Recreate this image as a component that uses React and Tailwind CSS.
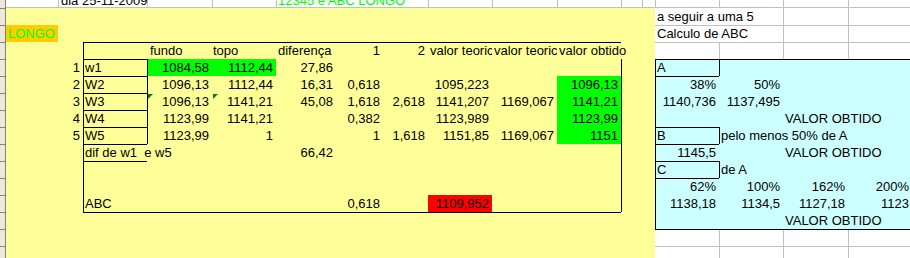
import React from 'react';
import clsx from 'clsx';

// column widths of the sheet, from x=6 (after the row-header strip)
const COL_W = [
  'w-[52px]', 'w-[25px]', 'w-[64px]', 'w-[65px]', 'w-[64px]', 'w-[60px]', 'w-[47px]', 'w-[45px]',
  'w-[64px]', 'w-[65px]', 'w-[64px]', 'w-[21px]', 'w-[13px]', 'w-[64px]', 'w-[64px]', 'w-[65px]', 'w-[64px]',
];

// first row is partly merged
const TOP_W = [
  'w-[52px]', 'w-[89px]', 'w-[65px]', 'w-[64px]', 'w-[152px]', 'w-[64px]', 'w-[65px]',
  'w-[64px]', 'w-[21px]', 'w-[13px]', 'w-[64px]', 'w-[64px]', 'w-[65px]', 'w-[64px]',
];

// cell lines sit on the first pixel (top / left) of a cell
const LINES = {
  t: 'shadow-[inset_0_1px_0_#000]',
  l: 'shadow-[inset_1px_0_0_#000]',
  tl: 'shadow-[inset_1px_1px_0_#000]',
  gt: 'shadow-[inset_0_1px_0_#c0c0c0]',
  gl: 'shadow-[inset_1px_0_0_#c0c0c0]',
  gtl: 'shadow-[inset_1px_1px_0_#c0c0c0]',
  tgl: 'shadow-[inset_0_1px_0_#000,inset_1px_0_0_#c0c0c0]',
};

const GREEN = 'bg-[#00ff00]';
const RED = 'bg-[#ff0000]';

const n = (text, extra = {}) => ({ text, right: true, ...extra });

const rows = [
  { side: 'white', cells: { 13: { text: 'a seguir a uma 5' }, 15: { line: 'gl' }, 16: { line: 'gl' } } },
  {
    side: 'white',
    cells: {
      0: { text: 'LONGO', bg: 'bg-[#ffcc00]', color: 'text-[#00ff00]' },
      13: { text: 'Calculo de ABC', line: 'gt' }, 14: { line: 'gt' }, 15: { line: 'gtl' }, 16: { line: 'gtl' },
    },
  },
  {
    side: 'white',
    cells: {
      2: { line: 'tl' },
      3: { text: 'fundo', line: 't', pad: 'pl-[3px]' },
      4: { text: 'topo', line: 't', pad: 'pl-px' },
      5: { text: 'diferença', line: 't' },
      6: n('1', { line: 't' }),
      7: n('2', { line: 't' }),
      8: { text: 'valor teoric', line: 't', clip: true },
      9: { text: 'valor teoric', line: 't', clip: true },
      10: { text: 'valor obtido', line: 't' },
      13: { line: 'gt' }, 14: { line: 'gtl' }, 15: { line: 'gtl' }, 16: { line: 'gtl' },
    },
  },
  {
    side: 'cyan',
    cells: {
      1: n('1'), 2: { text: 'w1', line: 'tl' },
      3: n('1084,58', { line: 'l', bg: GREEN }), 4: n('1112,44', { bg: GREEN }), 5: n('27,86'),
      11: { line: 'l' },
      13: { text: 'A', line: 'tl' }, 14: { line: 'tl' }, 15: { line: 't' }, 16: { line: 't' },
    },
  },
  {
    side: 'cyan',
    cells: {
      1: n('2'), 2: { text: 'W2', line: 'tl' },
      3: n('1096,13', { line: 'l' }), 4: n('1112,44'), 5: n('16,31'), 6: n('0,618'),
      8: n('1095,223'), 10: n('1096,13', { bg: GREEN }), 11: { line: 'l' },
      13: n('38%', { line: 'tl' }), 14: n('50%'),
    },
  },
  {
    side: 'cyan',
    cells: {
      1: n('3'), 2: { text: 'W3', line: 'tl' },
      3: n('1096,13', { line: 'l', flag: true }), 4: n('1141,21', { flag: true }), 5: n('45,08'),
      6: n('1,618'), 7: n('2,618'), 8: n('1141,207'), 9: n('1169,067'),
      10: n('1141,21', { bg: GREEN }), 11: { line: 'l' },
      13: n('1140,736', { line: 'l' }), 14: n('1137,495'),
    },
  },
  {
    side: 'cyan',
    cells: {
      1: n('4'), 2: { text: 'W4', line: 'tl' },
      3: n('1123,99', { line: 'l' }), 4: n('1141,21'), 6: n('0,382'), 8: n('1123,989'),
      10: n('1123,99', { bg: GREEN }), 11: { line: 'l' },
      13: { line: 'l' }, 15: { text: 'VALOR OBTIDO' },
    },
  },
  {
    side: 'cyan',
    cells: {
      1: n('5'), 2: { text: 'W5', line: 'tl' },
      3: n('1123,99', { line: 'l' }), 4: n('1'), 6: n('1'), 7: n('1,618'), 8: n('1151,85'), 9: n('1169,067'),
      10: n('1151', { bg: GREEN }), 11: { line: 'l' },
      13: { text: 'B', line: 'tl' }, 14: { text: 'pelo menos 50% de A', line: 'l' },
    },
  },
  {
    side: 'cyan',
    cells: {
      2: { text: 'dif de w1  e w5', line: 'tl' }, 5: n('66,42'), 11: { line: 'l' },
      13: n('1145,5', { line: 'tl' }), 15: { text: 'VALOR OBTIDO' },
    },
  },
  {
    side: 'cyan',
    cells: {
      2: { line: 'tl' }, 11: { line: 'l' },
      13: { text: 'C', line: 'tl' }, 14: { text: 'de A', line: 'l' },
    },
  },
  {
    side: 'cyan',
    cells: {
      2: { line: 'l' }, 11: { line: 'l' },
      13: n('62%', { line: 'tl' }), 14: n('100%'), 15: n('162%'), 16: n('200%'),
    },
  },
  {
    side: 'cyan',
    cells: {
      2: { text: 'ABC', line: 'l' }, 6: n('0,618'), 8: n('1109,952', { bg: RED }), 11: { line: 'l' },
      13: n('1138,18', { line: 'l' }), 14: n('1134,5'), 15: n('1127,18'), 16: n('1123'),
    },
  },
  {
    side: 'cyan',
    cells: {
      2: { line: 't' }, 3: { line: 't' }, 4: { line: 't' }, 5: { line: 't' }, 6: { line: 't' },
      7: { line: 't' }, 8: { line: 't' }, 9: { line: 't' }, 10: { line: 't' },
      13: { line: 'l' }, 15: { text: 'VALOR OBTIDO' },
    },
  },
  { side: 'white', cells: { 13: { line: 't' }, 14: { line: 'tgl' }, 15: { line: 'tgl' }, 16: { line: 'tgl' } } },
  { side: 'white', cells: { 13: { line: 'gt' }, 14: { line: 'gtl' }, 15: { line: 'gtl' }, 16: { line: 'gtl' } } },
];

// text cells go on top so that text running past the cell edge isn't covered by the next fill
const Cell = ({ w, spec = {}, bg }) => (
  <div
    className={clsx(
      w,
      'relative h-full shrink-0 whitespace-pre',
      spec.text && 'z-10',
      spec.bg || bg,
      spec.line && LINES[spec.line],
      spec.right ? 'pr-[3px] text-right' : spec.pad || 'pl-[2px]',
      spec.clip && 'overflow-hidden',
      spec.color
    )}
  >
    {spec.flag && (
      <span className="absolute left-px top-px h-0 w-0 border-t-[5px] border-r-[5px] border-t-[#008000] border-r-transparent" />
    )}
    {spec.text}
  </div>
);

const RowHeaders = () => (
  <div className="flex w-[6px] shrink-0 flex-col border-r border-[#808080] bg-[#ece9d8]">
    <div className="h-[9px] shrink-0 border-b border-[#808080]" />
    {Array.from({ length: 15 }, (_, i) => (
      <div key={i} className="h-[17px] shrink-0 border-b border-[#808080]" />
    ))}
  </div>
);

const App = () => {
  return (
    <div className="flex h-[258px] w-[910px] overflow-hidden bg-white font-['Liberation_Sans',Arial,sans-serif] text-[13px] leading-[17px] text-black">
      <RowHeaders />
      <div className="flex shrink-0 flex-col">
        <div className="-mt-[8px] flex h-[16px] shrink-0 border-b border-[#c0c0c0] bg-white">
          {TOP_W.map((w, i) => (
            <Cell
              key={i}
              w={w}
              spec={{
                line: i === 0 ? undefined : 'gl',
                text: i === 1 ? 'dia 25-11-2009' : i === 4 ? '12345 e ABC LONGO' : undefined,
                color: i === 4 ? 'text-[#00ff00]' : undefined,
                pad: i === 1 ? 'pl-[3px]' : undefined,
              }}
            />
          ))}
        </div>
        {rows.map((row, k) => (
          <div key={k} className="flex h-[17px] shrink-0">
            {COL_W.map((w, i) => (
              <Cell
                key={i}
                w={w}
                spec={row.cells[i]}
                bg={i <= 12 ? 'bg-[#ffff99]' : row.side === 'cyan' ? 'bg-[#ccffff]' : 'bg-white'}
              />
            ))}
          </div>
        ))}
      </div>
    </div>
  );
};

export default App;
